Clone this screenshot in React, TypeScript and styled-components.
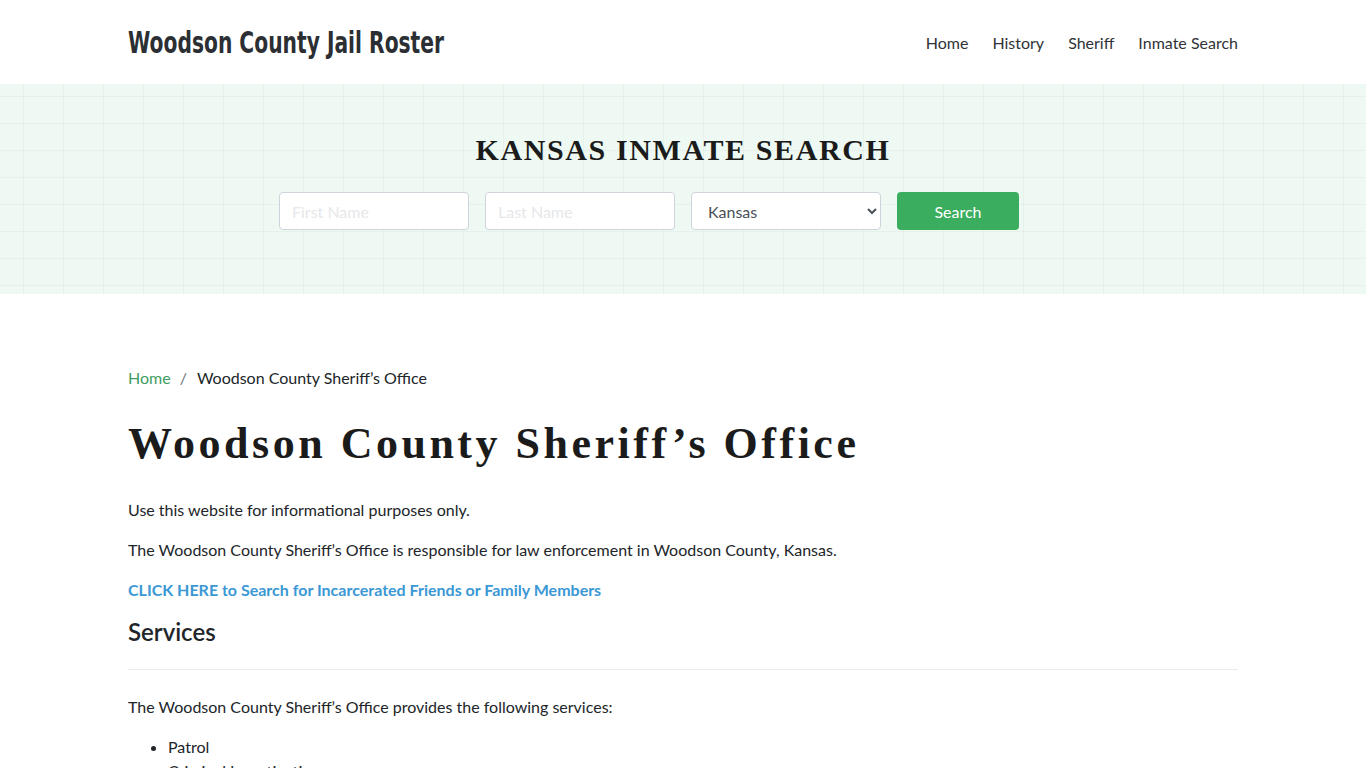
import React from "react";
import styled, { createGlobalStyle } from "styled-components";

const GlobalStyle = createGlobalStyle`
  * { box-sizing: border-box; }
  body {
    margin: 0;
    font-family: Lato, "Open Sans", sans-serif;
    font-size: 16px;
    color: #212529;
    background: #fff;
  }
`;

const Container = styled.div`
  width: 1140px;
  margin: 0 auto;
  padding: 0 15px;
`;

const Header = styled.header`
  height: 84px;
  background: #fff;
`;

const HeaderInner = styled(Container)`
  height: 100%;
  display: flex;
  align-items: center;
  justify-content: space-between;
`;

const Logo = styled.a`
  display: inline-block;
  font-family: "DejaVu Sans", sans-serif;
  font-weight: 700;
  font-size: 30px;
  color: #2b2f33;
  text-decoration: none;
  white-space: nowrap;
  transform: scaleX(0.675);
  transform-origin: left center;
  width: 315px;
  margin-top: 1px;
`;

const Nav = styled.nav`
  display: flex;
  gap: 24px;
`;

const NavLink = styled.a`
  font-size: 16px;
  color: #2f3337;
  text-decoration: none;
`;

const Hero = styled.section`
  height: 210px;
  background-color: #edf9f2;
  background-image:
    linear-gradient(to right, rgba(0, 0, 0, 0.03) 1px, transparent 1px),
    linear-gradient(to bottom, rgba(0, 0, 0, 0.03) 1px, transparent 1px);
  background-size: 40px 27px;
  background-position: 23px 12px;
  display: flex;
  flex-direction: column;
  align-items: center;
  padding-top: 48px;
`;

const HeroTitle = styled.h2`
  margin: 0;
  font-family: "Liberation Serif", "Times New Roman", serif;
  font-weight: 700;
  font-size: 30px;
  letter-spacing: 1.6px;
  color: #1b1b1b;
  line-height: 36px;
`;

const SearchForm = styled.form`
  display: flex;
  gap: 16px;
  margin-top: 24px;
  margin-right: 68px;
`;

const Field = styled.input`
  width: 190px;
  height: 38px;
  border: 1px solid #ced4da;
  border-radius: 4px;
  padding: 6px 12px;
  font-family: Lato, sans-serif;
  font-size: 16px;
  background: #fff;
  &::placeholder { color: #e6e8ea; }
`;

const Select = styled.select`
  width: 190px;
  height: 38px;
  border: 1px solid #ced4da;
  border-radius: 4px;
  padding: 6px 8px 6px 12px;
  font-family: Lato, sans-serif;
  font-size: 16px;
  color: #495057;
  background: #fff;
`;

const Button = styled.button`
  width: 122px;
  height: 38px;
  border: none;
  border-radius: 4px;
  background: #3bad5e;
  color: #fff;
  font-family: Lato, sans-serif;
  font-size: 16px;
`;

const Main = styled(Container)`
  padding-top: 72px;
`;

const Breadcrumb = styled.div`
  display: flex;
  align-items: center;
  gap: 9px;
  font-size: 16px;
  line-height: 24px;
  color: #212529;
`;

const Crumb = styled.a`
  color: #3e9e62;
  text-decoration: none;
`;

const Sep = styled.span`
  color: #6c757d;
  margin-right: 1px;
`;

const Title = styled.h1`
  margin: 28px 0 28px;
  font-family: "Liberation Serif", "Times New Roman", serif;
  font-weight: 700;
  font-size: 44px;
  line-height: 52px;
  letter-spacing: 3.5px;
  color: #1b1b1b;
`;

const Para = styled.p`
  margin: 0 0 16px;
  font-size: 16px;
  line-height: 24px;
`;

const LinkPara = styled.a`
  display: block;
  margin: 0 0 13px;
  font-weight: 700;
  color: #3a98d5;
  text-decoration: none;
  line-height: 24px;
`;

const SubTitle = styled.h2`
  margin: 0;
  font-size: 24px;
  font-weight: 600;
  line-height: 34px;
  color: #212529;
`;

const Rule = styled.hr`
  border: none;
  border-top: 1px solid #e9ecef;
  margin: 20px 0 25px;
`;

const List = styled.ul`
  margin: 0;
  padding-left: 40px;
  line-height: 24px;
`;

export default function App() {
  return (
    <>
      <GlobalStyle />
      <Header>
        <HeaderInner>
          <Logo href="#">Woodson County Jail Roster</Logo>
          <Nav>
            <NavLink href="#">Home</NavLink>
            <NavLink href="#">History</NavLink>
            <NavLink href="#">Sheriff</NavLink>
            <NavLink href="#">Inmate Search</NavLink>
          </Nav>
        </HeaderInner>
      </Header>
      <Hero>
        <HeroTitle>KANSAS INMATE SEARCH</HeroTitle>
        <SearchForm onSubmit={(e) => e.preventDefault()}>
          <Field placeholder="First Name" />
          <Field placeholder="Last Name" />
          <Select defaultValue="Kansas">
            <option>Kansas</option>
          </Select>
          <Button type="submit">Search</Button>
        </SearchForm>
      </Hero>
      <Main>
        <Breadcrumb>
          <Crumb href="#">Home</Crumb>
          <Sep>/</Sep>
          <span>Woodson County Sheriff’s Office</span>
        </Breadcrumb>
        <Title>Woodson County Sheriff’s Office</Title>
        <Para>Use this website for informational purposes only.</Para>
        <Para>
          The Woodson County Sheriff’s Office is responsible for law enforcement in Woodson County, Kansas.
        </Para>
        <LinkPara href="#">CLICK HERE to Search for Incarcerated Friends or Family Members</LinkPara>
        <SubTitle>Services</SubTitle>
        <Rule />
        <Para>The Woodson County Sheriff’s Office provides the following services:</Para>
        <List>
          <li>Patrol</li>
          <li>Criminal Investigations</li>
          <li>Jail Operations</li>
        </List>
      </Main>
    </>
  );
}
